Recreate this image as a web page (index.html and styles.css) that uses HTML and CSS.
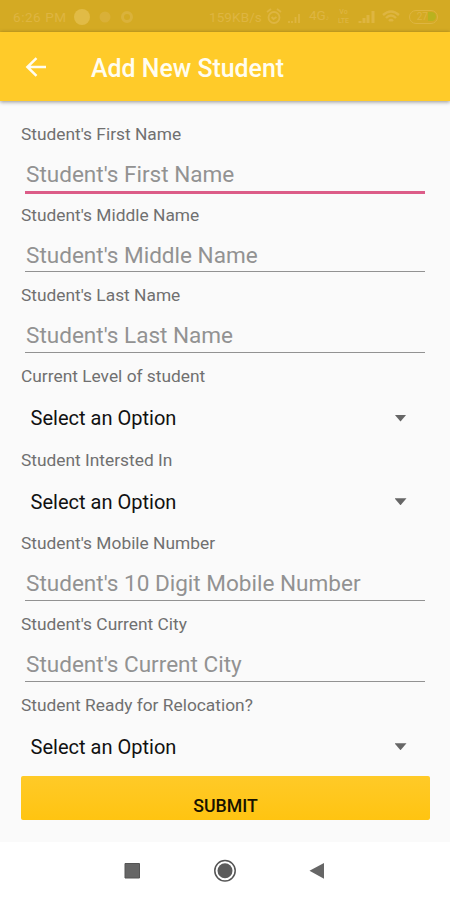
FILE: index.html
```html
<!DOCTYPE html>
<html lang="en">
<head>
<meta charset="utf-8">
<title>Add New Student</title>
<link rel="stylesheet" href="styles.css">
</head>
<body>
<div class="status">
  <span class="time">6:26 PM</span>
  <svg class="dots" width="66" height="20" viewBox="0 0 66 20"><circle cx="9" cy="10" r="8" fill="#e1bb46"/><circle cx="32" cy="10" r="5.500" fill="#d9b038"/><circle cx="54" cy="10" r="4.500" fill="none" stroke="#dab23b" stroke-width="3"/></svg>
  <span class="speed">159KB/s</span>
  <svg class="alarm" width="16" height="18" viewBox="0 0 16 18"><circle cx="8" cy="9.500" r="5.500"/><path d="M1 4l4-3M15 4l-4-3M5.500 9l2 2 3-2"/></svg>
  <svg class="sig" width="13" height="16" viewBox="0 0 13 16"><path d="M1 14v-2M4 14v-2M7.500 14V8M11 14V5"/></svg>
  <span class="net">4G<small>♪</small></span>
  <span class="volte"><span>Vo</span><span>LTE</span></span>
  <svg class="bars" width="18" height="16" viewBox="0 0 18 16"><path d="M2 14v-2M6 14V9M10 14V6M15 14V2" stroke-width="3"/></svg>
  <svg class="wifi" width="18" height="16" viewBox="0 0 18 16"><path d="M1 6Q9-1 17 6M4 9Q9 4 14 9M7 12Q9 10 11 12"/></svg>
  <span class="battery"><span>27</span><i></i></span>
</div>
<header class="appbar">
  <svg width="22" height="20" viewBox="0 0 22 20"><path d="M11.500 1.200L2.400 10l9.100 8.800M2.400 10H21" fill="none" stroke="#fffdf0" stroke-width="2.500"/></svg>
  <h1>Add New Student</h1>
</header>
<main class="form">
  <div class="field"><label for="first">Student's First Name</label><input class="focus" id="first" placeholder="Student's First Name"></div>
  <div class="field"><label for="middle">Student's Middle Name</label><input id="middle" placeholder="Student's Middle Name"></div>
  <div class="field"><label for="last">Student's Last Name</label><input id="last" placeholder="Student's Last Name"></div>
  <div class="field choice"><label>Current Level of student</label><div class="select"><span>Select an Option</span><i></i></div></div>
  <div class="field choice"><label>Student Intersted In</label><div class="select"><span>Select an Option</span><i></i></div></div>
  <div class="field"><label for="mobile">Student's Mobile Number</label><input id="mobile" placeholder="Student's 10 Digit Mobile Number"></div>
  <div class="field"><label for="city">Student's Current City</label><input id="city" placeholder="Student's Current City"></div>
  <div class="field choice"><label>Student Ready for Relocation?</label><div class="select"><span>Select an Option</span><i></i></div></div>
  <button class="submit">SUBMIT</button>
</main>
<nav class="nav">
  <svg width="450" height="58" viewBox="0 0 450 58"><path d="M125 21.500h14.500v14.500H125z" fill="#666" stroke="#555" stroke-width="1"/><circle cx="225" cy="28.700" r="10.200" fill="none" stroke="#555" stroke-width="1.500"/><circle cx="225" cy="28.700" r="7.500" fill="#5b5b5b"/><path d="M309.500 28.800L324 21v15.800z" fill="#666"/></svg>
</nav>
</body>
</html>
```

FILE: styles.css
```css
* { box-sizing: border-box; }
body { margin: 0; width: 450px; height: 900px; overflow: hidden; display: flex; flex-direction: column; background: #fafafa; font-family: Roboto, sans-serif; }
.status { height: 32px; flex: none; background: #d4aa23; color: #deb541; display: flex; align-items: center; padding: 1px 12px 0 13px; font-size: 13.5px; line-height: 16px; white-space: nowrap; }
.status svg { flex: none; }
.time { width: 60px; letter-spacing: .55px; }
.speed { margin-left: 70px; width: 57px; letter-spacing: .1px; }
.alarm, .sig, .bars, .wifi { fill: none; stroke: #deb541; stroke-width: 1.8; }
.sig { margin-left: 6px; }
.net { margin-left: 8px; width: 27px; }
.net small { font-size: 7px; }
.volte { display: flex; flex-direction: column; width: 15px; font-size: 7px; font-weight: 500; line-height: 9px; text-align: center; }
.bars { margin-left: 7px; }
.wifi { margin-left: 6px; stroke-width: 2.4; }
.battery { margin-left: auto; width: 29px; height: 14px; border: 1.5px solid #deb541; border-radius: 7px; display: flex; align-items: center; justify-content: flex-end; font-size: 10px; }
.battery i { width: 8px; height: 9px; background: #b9b21e; border-radius: 0 5px 5px 0; margin-right: 1px; }
.appbar { height: 69px; flex: none; background: #ffcb29; display: flex; align-items: center; padding: 2px 0 0 25px; box-shadow: 0 1px 4px rgba(0,0,0,.42); }
.appbar svg { margin-top: -1px; }
.appbar h1 { margin: 3px 0 0 44px; font-size: 24.9px; line-height: 32px; font-weight: 500; color: #fffdf0; white-space: nowrap; }
.form { padding: 21.2px 20px 0 21px; height: 741px; flex: none; display: flex; flex-direction: column; }
.field { height: 80.65px; flex: none; display: flex; flex-direction: column; }
.field.choice { height: 83.7px; }
label { font-size: 17.35px; line-height: 24px; height: 24px; color: #707070; white-space: nowrap; }
input { margin: 12.2px 5px 0 4px; padding: 0 0 0 1px; height: 33.2px; border: 0; border-bottom: 1.5px solid #929292; border-radius: 0; outline: 0; background: none; font: 22.55px/30px Roboto, sans-serif; }
input.focus { height: 35.500px; border-bottom: 3px solid #dc5c88; }
input::placeholder { color: #929292; opacity: 1; }
.select { margin-top: 16px; height: 28px; padding: 0 23.5px 0 9.5px; display: flex; align-items: center; justify-content: space-between; font-size: 20.05px; line-height: 28px; color: #111; }
.select i { width: 12px; height: 7px; background: #666; clip-path: polygon(0 0, 100% 0, 50% 100%); }
.submit { height: 44px; flex: none; border: 0; border-radius: 2px; padding: 16px 0 0; background: linear-gradient(#ffca28, #ffc411); color: #171200; font: 500 17.7px/24px Roboto, sans-serif; }
.nav { height: 58px; flex: none; background: #fff; }
.nav svg { display: block; }
```
